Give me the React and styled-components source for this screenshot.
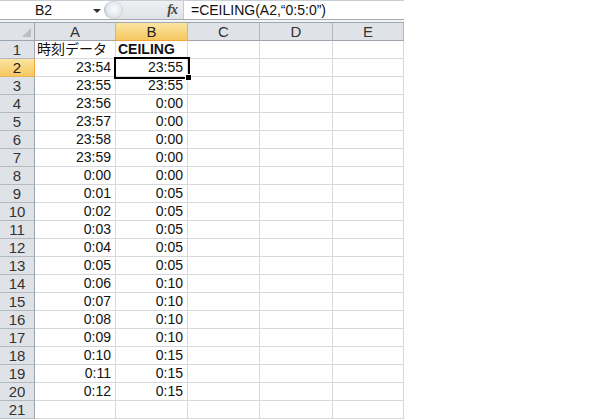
import React from "react";
import styled, { createGlobalStyle, css } from "styled-components";

const GlobalStyle = createGlobalStyle`
  html, body {
    margin: 0;
    padding: 0;
    background: #ffffff;
  }
  body {
    font-family: "Liberation Sans", "Noto Sans CJK JP", sans-serif;
  }
`;

const COLUMNS = ["A", "B", "C", "D", "E"];

const TIMES_A = [
  "23:54", "23:55", "23:56", "23:57", "23:58", "23:59", "0:00", "0:01",
  "0:02", "0:03", "0:04", "0:05", "0:06", "0:07", "0:08", "0:09",
  "0:10", "0:11", "0:12",
];
const TIMES_B = [
  "23:55", "23:55", "0:00", "0:00", "0:00", "0:00", "0:00", "0:05",
  "0:05", "0:05", "0:05", "0:05", "0:10", "0:10", "0:10", "0:10",
  "0:15", "0:15", "0:15",
];

export default function App() {
  const rows = [];
  for (let r = 1; r <= 21; r++) {
    let a = "";
    let b = "";
    if (r === 1) {
      a = "時刻データ";
      b = "CEILING";
    } else if (r <= 20) {
      a = TIMES_A[r - 2];
      b = TIMES_B[r - 2];
    }
    rows.push({ r, a, b });
  }

  return (
    <>
      <GlobalStyle />
      <Window>
        <FormulaBar>
          <NameBox>
            <NameText>B2</NameText>
            <DropArrow />
          </NameBox>
          <Splitter>
            <Knob />
            <Fx>fx</Fx>
          </Splitter>
          <FormulaField>=CEILING(A2,“0:5:0”)</FormulaField>
        </FormulaBar>
        <Gap />
        <Sheet>
          <Corner>
            <CornerMark />
          </Corner>
          {COLUMNS.map((c) => (
            <ColHead key={c} $active={c === "B"}>
              {c}
            </ColHead>
          ))}
          {rows.map(({ r, a, b }) => (
            <React.Fragment key={r}>
              <RowHead $active={r === 2}>{r}</RowHead>
              <Cell $align={r === 1 ? "left" : "right"}>{a}</Cell>
              <Cell
                $align={r === 1 ? "left" : "right"}
                $bold={r === 1}
                $selected={r === 2}
              >
                {b}
                {r === 2 && <FillHandle />}
              </Cell>
              <Cell />
              <Cell />
              <Cell />
            </React.Fragment>
          ))}
        </Sheet>
      </Window>
    </>
  );
}

const Window = styled.div`
  width: 404px;
  height: 420px;
  overflow: hidden;
  display: flex;
  flex-direction: column;
`;

const FormulaBar = styled.div`
  display: flex;
  border-top: 1px solid #c9ced4;
  border-bottom: 1px solid #a5abb3;
  box-sizing: border-box;
  height: 20px;
  background: #ffffff;
`;

const NameBox = styled.div`
  width: 104px;
  display: flex;
  align-items: center;
  position: relative;
  background: #ffffff;
`;

const NameText = styled.span`
  margin-left: 35px;
  font-size: 14px;
  color: #111;
`;

const DropArrow = styled.span`
  position: absolute;
  left: 93px;
  top: 8px;
  width: 0;
  height: 0;
  border-left: 4px solid transparent;
  border-right: 4px solid transparent;
  border-top: 4px solid #333;
`;

const Splitter = styled.div`
  width: 79px;
  display: flex;
  align-items: center;
  justify-content: space-between;
  background: linear-gradient(#eef0f3, #dfe2e6);
  border-radius: 9px 0 0 9px;
  border-left: 1px solid #b8bec6;
  box-sizing: border-box;
  padding-right: 6px;
`;

const Knob = styled.span`
  width: 16px;
  height: 16px;
  margin-left: 1px;
  border-radius: 50%;
  background: radial-gradient(circle at 50% 45%, #fbfcfd 0%, #e7eaee 55%, #c8cdd4 100%);
  box-shadow: 0 0 0 1px #cfd4da;
`;

const Fx = styled.span`
  font-family: "Liberation Serif", "DejaVu Serif", serif;
  font-style: italic;
  font-weight: bold;
  font-size: 14px;
  color: #444;
  letter-spacing: -1px;
`;

const FormulaField = styled.div`
  flex: 1;
  display: flex;
  align-items: center;
  padding-left: 7px;
  font-size: 14px;
  color: #111;
  background: #ffffff;
  border-left: 1px solid #c7ccd2;
  white-space: nowrap;
`;

const Gap = styled.div`
  height: 2px;
  background: #f3f4f6;
  border-bottom: 1px solid #a0a7af;
`;

const Sheet = styled.div`
  display: grid;
  grid-template-columns: 35px 81px 72px 72px 73px 71px;
  grid-auto-rows: 18px;
`;

const cellBase = css`
  box-sizing: border-box;
  border-right: 1px solid #d6d8db;
  border-bottom: 1px solid #d6d8db;
  font-size: 14px;
  line-height: 17px;
  color: #111;
  white-space: nowrap;
  overflow: visible;
`;

const headBase = css`
  box-sizing: border-box;
  display: flex;
  align-items: center;
  justify-content: center;
  font-size: 15px;
  color: #333;
  background: #dfe3e8;
  border-right: 1px solid #b4b9c0;
  border-bottom: 1px solid #b4b9c0;
`;

const activeHead = css`
  background: linear-gradient(#fbe5a2, #f6c760);
  color: #222;
`;

const Corner = styled.div`
  ${headBase};
  position: relative;
  border-right: 1px solid #9ea5ad;
  border-bottom: 1px solid #9ea5ad;
`;

const CornerMark = styled.span`
  position: absolute;
  right: 3px;
  bottom: 3px;
  width: 0;
  height: 0;
  border-left: 9px solid transparent;
  border-bottom: 9px solid #b9bec5;
`;

const ColHead = styled.div`
  ${headBase};
  border-bottom: 1px solid #9ea5ad;
  ${(p) => p.$active && activeHead};
  ${(p) => p.$active && "border-bottom-color: #f2a43a; border-right-color: #e5b55c;"};
`;

const RowHead = styled.div`
  ${headBase};
  border-right: 1px solid #9ea5ad;
  ${(p) => p.$active && activeHead};
  ${(p) => p.$active && "border-right-color: #f2a43a; border-bottom-color: #e5b55c;"};
`;

const Cell = styled.div`
  ${cellBase};
  position: relative;
  text-align: ${(p) => p.$align || "left"};
  padding: 0 ${(p) => (p.$align === "right" ? "4px" : "2px")} 0 2px;
  font-weight: ${(p) => (p.$bold ? "bold" : "normal")};
  ${(p) =>
    p.$selected &&
    css`
      outline: 2px solid #000;
      outline-offset: 0px;
      z-index: 1;
    `};
`;

const FillHandle = styled.span`
  position: absolute;
  right: -5px;
  bottom: -5px;
  width: 5px;
  height: 5px;
  background: #000;
  border: 1px solid #fff;
`;
